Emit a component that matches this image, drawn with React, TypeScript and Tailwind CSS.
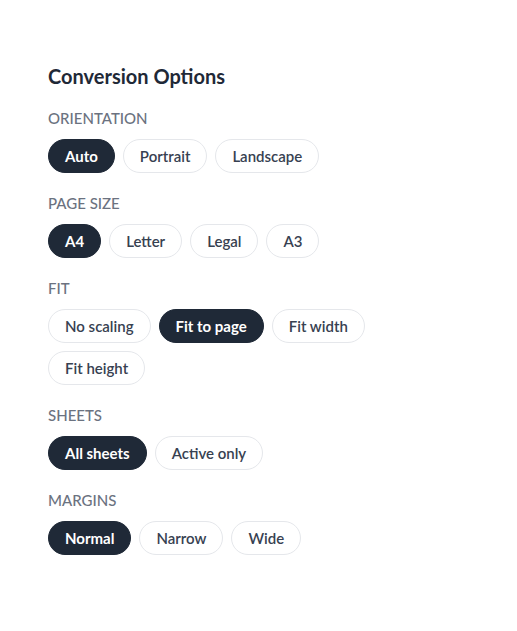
const sections: { label: string; options: string[]; active: string }[] = [
  { label: 'Orientation', options: ['Auto', 'Portrait', 'Landscape'], active: 'Auto' },
  { label: 'Page size', options: ['A4', 'Letter', 'Legal', 'A3'], active: 'A4' },
  { label: 'Fit', options: ['No scaling', 'Fit to page', 'Fit width', 'Fit height'], active: 'Fit to page' },
  { label: 'Sheets', options: ['All sheets', 'Active only'], active: 'All sheets' },
  { label: 'Margins', options: ['Normal', 'Narrow', 'Wide'], active: 'Normal' },
];

function Pill({ label, active }: { label: string; active: boolean }) {
  return (
    <button
      type="button"
      className={
        active
          ? 'rounded-full border border-[#1f2937] bg-[#1f2937] px-4 py-[7px] text-[15px] leading-[18px] font-bold text-white'
          : 'rounded-full border border-[#e5e7eb] bg-white px-4 py-[7px] text-[15px] leading-[18px] font-semibold text-[#374151]'
      }
    >
      {label}
    </button>
  );
}

export default function App() {
  return (
    <div className="min-h-screen bg-white px-12 pt-[62px]" style={{ fontFamily: 'Lato, "Noto Sans", sans-serif' }}>
      <h2 className="text-xl leading-7 font-bold text-[#1f2937]">Conversion Options</h2>
      <div className="mt-[18px] flex flex-col gap-5">
        {sections.map((s) => (
          <div key={s.label}>
            <div className="mb-[11px] text-[15px] leading-5 font-medium text-[#6b7280] uppercase">{s.label}</div>
            <div className="flex max-w-[340px] flex-wrap gap-2">
              {s.options.map((o) => (
                <Pill key={o} label={o} active={o === s.active} />
              ))}
            </div>
          </div>
        ))}
      </div>
    </div>
  );
}
